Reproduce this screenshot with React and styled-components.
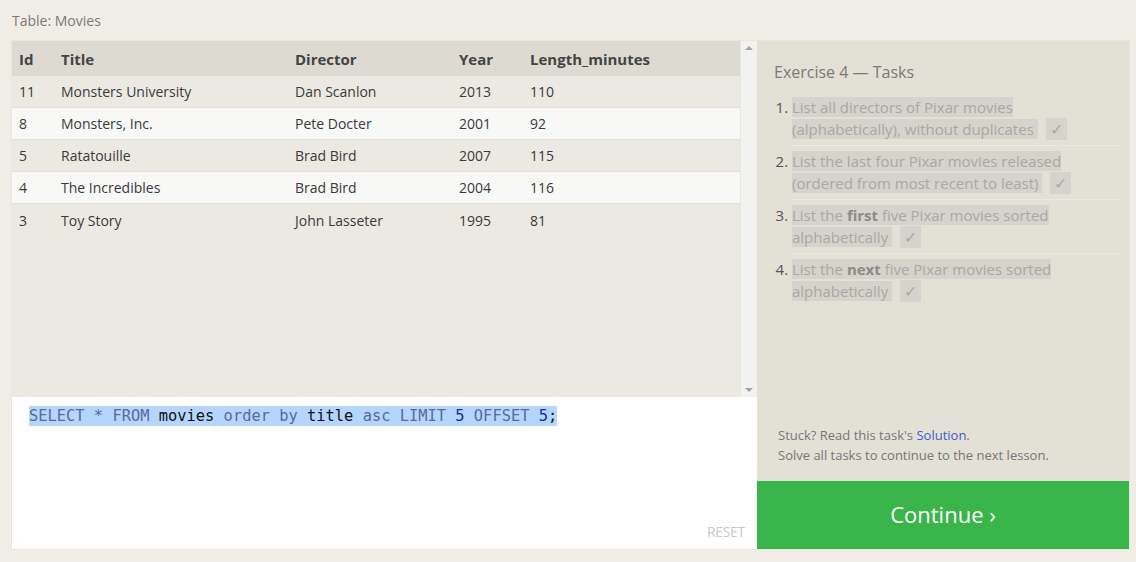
import React from 'react';
import styled, { createGlobalStyle } from 'styled-components';

const GlobalStyle = createGlobalStyle`
  html, body {
    margin: 0;
    padding: 0;
    background: #efede6;
    font-family: 'Open Sans', 'Noto Sans', sans-serif;
  }
  * {
    box-sizing: border-box;
  }
`;

const movies = [
  { id: 11, title: 'Monsters University', director: 'Dan Scanlon', year: 2013, length: 110 },
  { id: 8, title: 'Monsters, Inc.', director: 'Pete Docter', year: 2001, length: 92 },
  { id: 5, title: 'Ratatouille', director: 'Brad Bird', year: 2007, length: 115 },
  { id: 4, title: 'The Incredibles', director: 'Brad Bird', year: 2004, length: 116 },
  { id: 3, title: 'Toy Story', director: 'John Lasseter', year: 1995, length: 81 },
];

function App() {
  return (
    <>
      <GlobalStyle />
      <Page>
        <TableName>Table: Movies</TableName>
        <Panel>
          <LeftColumn>
            <TableArea>
              <TableScroll>
                <HeaderRow>
                  <Cell>Id</Cell>
                  <Cell>Title</Cell>
                  <Cell>Director</Cell>
                  <Cell>Year</Cell>
                  <Cell>Length_minutes</Cell>
                </HeaderRow>
                {movies.map((movie, i) => (
                  <Row
                    key={movie.id}
                    striped={i % 2 === 1}
                    last={i === movies.length - 1}
                  >
                    <Cell>{movie.id}</Cell>
                    <Cell>{movie.title}</Cell>
                    <Cell>{movie.director}</Cell>
                    <Cell>{movie.year}</Cell>
                    <Cell>{movie.length}</Cell>
                  </Row>
                ))}
              </TableScroll>
              <Scrollbar>
                <Arrow up />
                <Arrow />
              </Scrollbar>
            </TableArea>
            <Editor>
              <Code>
                <Kw>SELECT * FROM </Kw>
                <Ident>movies</Ident>
                <Kw> order by </Kw>
                <Ident>title</Ident>
                <Kw> asc LIMIT </Kw>
                <Num>5</Num>
                <Kw> OFFSET </Kw>
                <Num>5</Num>
                <Ident>;</Ident>
              </Code>
              <Reset>RESET</Reset>
            </Editor>
          </LeftColumn>
          <TaskPanel>
            <TaskBody>
              <TaskTitle>Exercise 4 — Tasks</TaskTitle>
              <TaskList>
                <Task>
                  <TaskText>List all directors of Pixar movies (alphabetically), without duplicates</TaskText>
                  <Check>✓</Check>
                </Task>
                <Task>
                  <TaskText>List the last four Pixar movies released (ordered from most recent to least)</TaskText>
                  <Check>✓</Check>
                </Task>
                <Task>
                  <TaskText>
                    List the <b>first</b> five Pixar movies sorted alphabetically
                  </TaskText>
                  <Check>✓</Check>
                </Task>
                <Task last>
                  <TaskText>
                    List the <b>next</b> five Pixar movies sorted alphabetically
                  </TaskText>
                  <Check>✓</Check>
                </Task>
              </TaskList>
            </TaskBody>
            <Hint>
              Stuck? Read this task's <HintLink>Solution</HintLink>.
              <br />
              Solve all tasks to continue to the next lesson.
            </Hint>
            <ContinueButton>Continue ›</ContinueButton>
          </TaskPanel>
        </Panel>
      </Page>
    </>
  );
}

export default App;

const Page = styled.div`
  padding: 0 8px 0 12px;
  height: 562px;
`;

const TableName = styled.div`
  height: 41px;
  padding-top: 11px;
  font-size: 14px;
  color: #7a7a78;
`;

const Panel = styled.div`
  display: flex;
  width: 1117px;
  height: 508px;
  box-shadow: 0 0 0 1px #e8e6df;
`;

const LeftColumn = styled.div`
  display: flex;
  flex-direction: column;
  width: 745px;
`;

const TableArea = styled.div`
  display: flex;
  height: 356px;
  background: #ebe9e2;
`;

const TableScroll = styled.div`
  flex: 1;
`;

const HeaderRow = styled.div`
  display: grid;
  grid-template-columns: 42px 234px 164px 71px 1fr;
  align-items: center;
  height: 35px;
  background: #dddbd1;
  font-size: 15px;
  font-weight: 700;
  color: #444;
`;

const Row = styled.div`
  display: grid;
  grid-template-columns: 42px 234px 164px 71px 1fr;
  align-items: center;
  height: 32px;
  background: ${({ striped }) => (striped ? '#f8f8f7' : '#ebe9e2')};
  border-bottom: ${({ last }) => (last ? 'none' : '1px solid #e1dfd8')};
  font-size: 14px;
  color: #3a3a3a;
`;

const Cell = styled.div`
  padding-left: 7px;
  white-space: nowrap;
`;

const Scrollbar = styled.div`
  display: flex;
  flex-direction: column;
  justify-content: space-between;
  align-items: center;
  width: 17px;
  padding: 5px 0;
  background: #f2f2f1;
  border-left: 1px solid #e6e6e4;
`;

const Arrow = styled.div`
  width: 0;
  height: 0;
  border-left: 4px solid transparent;
  border-right: 4px solid transparent;
  ${({ up }) =>
    up ? 'border-bottom: 4px solid #a3a3a3;' : 'border-top: 4px solid #a3a3a3;'}
`;

const Editor = styled.div`
  position: relative;
  flex: 1;
  background: #fff;
  padding: 7px 17px;
`;

const Code = styled.div`
  display: inline-block;
  background: #b4d5fe;
  font-family: 'DejaVu Sans Mono', 'Liberation Mono', monospace;
  font-size: 15.4px;
  line-height: 20px;
  white-space: pre;
`;

const Kw = styled.span`
  color: #5a6a98;
`;

const Ident = styled.span`
  color: #111;
`;

const Num = styled.span`
  color: #1c2aa0;
`;

const Reset = styled.div`
  position: absolute;
  right: 12px;
  bottom: 8px;
  font-size: 14px;
  letter-spacing: -0.3px;
  color: #c8c8c8;
`;

const TaskPanel = styled.div`
  display: flex;
  flex-direction: column;
  flex: 1;
  background: #e3e0d6;
`;

const TaskBody = styled.div`
  flex: 1;
  padding: 20px 8px 0 17px;
`;

const TaskTitle = styled.div`
  font-size: 16px;
  color: #7a7a76;
  margin-bottom: 13px;
`;

const TaskList = styled.ol`
  margin: 0;
  padding-left: 18px;
  font-size: 15px;
  line-height: 22px;
  color: #555;
`;

const Task = styled.li`
  padding: 0 0 5px;
  margin-bottom: 4px;
  border-bottom: ${({ last }) => (last ? 'none' : '1px solid #ebe9e3')};
`;

const TaskText = styled.span`
  background: #d5d3cb;
  color: #a9a8a4;
  padding-right: 4px;
  margin-right: 8px;
  b {
    color: #8c8b87;
  }
`;

const Check = styled.span`
  background: #d5d3cb;
  color: #aaa9a5;
  padding: 0 4px;
  font-size: 16px;
`;

const Hint = styled.div`
  padding: 0 17px 16px 21px;
  font-size: 13px;
  line-height: 20px;
  color: #777;
`;

const HintLink = styled.span`
  color: #3a5fc8;
`;

const ContinueButton = styled.div`
  display: flex;
  align-items: center;
  justify-content: center;
  height: 68px;
  padding-bottom: 2px;
  background: #3ab54a;
  color: #fff;
  font-size: 22px;
`;
